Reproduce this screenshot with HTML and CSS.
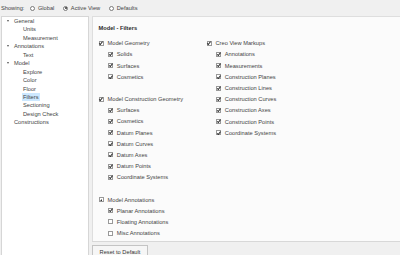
FILE: index.html
```html
<!DOCTYPE html>
<html lang="en">
<head>
    <meta charset="UTF-8">
    <title>Model - Filters</title>
    <link rel="stylesheet" href="styles.css">
</head>
<body>
    <div class="toolbar">
        <span class="showing">Showing:</span>
        <label class="radio"><span class="dot"></span>Global</label>
        <label class="radio"><span class="dot on"></span>Active View</label>
        <label class="radio"><span class="dot"></span>Defaults</label>
    </div>
    <div class="workspace">
        <nav class="tree">
            <div class="node"><span class="arrow"></span>General</div>
            <div class="node leaf">Units</div>
            <div class="node leaf">Measurement</div>
            <div class="node"><span class="arrow"></span>Annotations</div>
            <div class="node leaf">Text</div>
            <div class="node"><span class="arrow"></span>Model</div>
            <div class="node leaf">Explore</div>
            <div class="node leaf">Color</div>
            <div class="node leaf">Floor</div>
            <div class="node leaf"><span class="selected">Filters</span></div>
            <div class="node leaf">Sectioning</div>
            <div class="node leaf">Design Check</div>
            <div class="node top">Constructions</div>
        </nav>
        <div class="content">
            <div class="page">
                <div class="title">Model - Filters</div>
                <div class="columns">
                    <div class="column">
                        <div class="group">
                            <div class="row"><span class="cb on"></span>Model Geometry</div>
                            <div class="row sub"><span class="cb on"></span>Solids</div>
                            <div class="row sub"><span class="cb on"></span>Surfaces</div>
                            <div class="row sub"><span class="cb on"></span>Cosmetics</div>
                        </div>
                        <div class="group">
                            <div class="row"><span class="cb on"></span>Model Construction Geometry</div>
                            <div class="row sub"><span class="cb on"></span>Surfaces</div>
                            <div class="row sub"><span class="cb on"></span>Cosmetics</div>
                            <div class="row sub"><span class="cb on"></span>Datum Planes</div>
                            <div class="row sub"><span class="cb on"></span>Datum Curves</div>
                            <div class="row sub"><span class="cb on"></span>Datum Axes</div>
                            <div class="row sub"><span class="cb on"></span>Datum Points</div>
                            <div class="row sub"><span class="cb on"></span>Coordinate Systems</div>
                        </div>
                        <div class="group">
                            <div class="row"><span class="cb part"></span>Model Annotations</div>
                            <div class="row sub"><span class="cb on"></span>Planar Annotations</div>
                            <div class="row sub"><span class="cb"></span>Floating Annotations</div>
                            <div class="row sub"><span class="cb"></span>Misc Annotations</div>
                            <div class="row sub"><span class="cb"></span></div>
                        </div>
                    </div>
                    <div class="column">
                        <div class="group">
                            <div class="row"><span class="cb on"></span>Creo View Markups</div>
                            <div class="row sub"><span class="cb on"></span>Annotations</div>
                            <div class="row sub"><span class="cb on"></span>Measurements</div>
                            <div class="row sub"><span class="cb on"></span>Construction Planes</div>
                            <div class="row sub"><span class="cb on"></span>Construction Lines</div>
                            <div class="row sub"><span class="cb on"></span>Construction Curves</div>
                            <div class="row sub"><span class="cb on"></span>Construction Axes</div>
                            <div class="row sub"><span class="cb on"></span>Construction Points</div>
                            <div class="row sub"><span class="cb on"></span>Coordinate Systems</div>
                        </div>
                    </div>
                </div>
            </div>
            <div class="footer">
                <button class="reset">Reset to Default</button>
            </div>
        </div>
    </div>
</body>
</html>
```

FILE: styles.css
```css
html, body {
    margin: 0;
    padding: 0;
}
body {
    width: 400px;
    height: 255px;
    overflow: hidden;
    background-color: #f0f0f0;
    font-family: "Liberation Sans", Arial, sans-serif;
    font-size: 5.7px;
    color: #444;
}
.toolbar {
    height: 16px;
    display: flex;
    align-items: center;
    padding-left: 1px;
    box-sizing: border-box;
}
.showing {
    margin-right: 6px;
}
.radio {
    display: flex;
    align-items: center;
    margin-right: 9px;
}
.dot {
    width: 5px;
    height: 5px;
    border: 1px solid #7a7a7a;
    border-radius: 50%;
    box-sizing: border-box;
    margin-right: 2.5px;
    background-color: #fff;
    position: relative;
}
.dot.on::after {
    content: "";
    position: absolute;
    left: 0.5px;
    top: 0.5px;
    width: 2px;
    height: 2px;
    border-radius: 50%;
    background-color: #333;
}
.workspace {
    display: flex;
    height: 239px;
}
.tree {
    width: 88px;
    margin-left: 1px;
    box-sizing: border-box;
    border: 1px solid #d6d6d6;
    border-bottom: none;
    background-color: #fff;
}
.node {
    height: 8.45px;
    line-height: 8.45px;
    padding-left: 12px;
    position: relative;
    white-space: nowrap;
}
.node.leaf {
    padding-left: 21px;
}
.arrow {
    position: absolute;
    left: 4.5px;
    top: 3px;
    border-left: 1.6px solid transparent;
    border-right: 1.6px solid transparent;
    border-top: 2.4px solid #555;
}
.selected {
    background-color: #cce8ff;
    padding: 1px 1.5px;
    margin-left: -1.5px;
}
.content {
    flex: 1;
    margin-left: 3px;
    display: flex;
    flex-direction: column;
}
.page {
    flex: 1;
    background-color: #fbfbfb;
    border-top: 1px solid #dedede;
    border-left: 1px solid #dedede;
    padding: 6px 0 0 5.5px;
    overflow: hidden;
}
.title {
    font-weight: bold;
    color: #2a2a2a;
    line-height: 11.2px;
    margin-bottom: 3.5px;
}
.columns {
    display: grid;
    grid-template-columns: 108px auto;
}
.group {
    margin-bottom: 11px;
}
.row {
    height: 11.2px;
    display: flex;
    align-items: center;
    white-space: nowrap;
}
.row.sub {
    padding-left: 9.3px;
}
.cb {
    width: 5px;
    height: 5px;
    box-sizing: border-box;
    border: 1px solid #999;
    background-color: #fff;
    margin-right: 4px;
    position: relative;
    flex-shrink: 0;
}
.cb.on::after {
    content: "";
    position: absolute;
    left: 0.9px;
    top: -0.8px;
    width: 1.2px;
    height: 2.6px;
    border-right: 0.9px solid #333;
    border-bottom: 0.9px solid #333;
    transform: rotate(40deg);
}
.cb.part::after {
    content: "";
    position: absolute;
    right: 0.3px;
    bottom: 0.3px;
    border-left: 2.6px solid transparent;
    border-bottom: 2.6px solid #333;
}
.footer {
    height: 14px;
    border-top: 1px solid #d8d8d8;
    box-sizing: border-box;
    padding-top: 3px;
    overflow: hidden;
}
.reset {
    font-family: "Liberation Sans", Arial, sans-serif;
    font-size: 5.7px;
    color: #333;
    width: 56px;
    height: 14px;
    padding: 0;
    margin: 0;
    background-color: #f6f6f6;
    border: 1px solid #c4c4c4;
    text-align: center;
    line-height: 10px;
    display: block;
}
```
